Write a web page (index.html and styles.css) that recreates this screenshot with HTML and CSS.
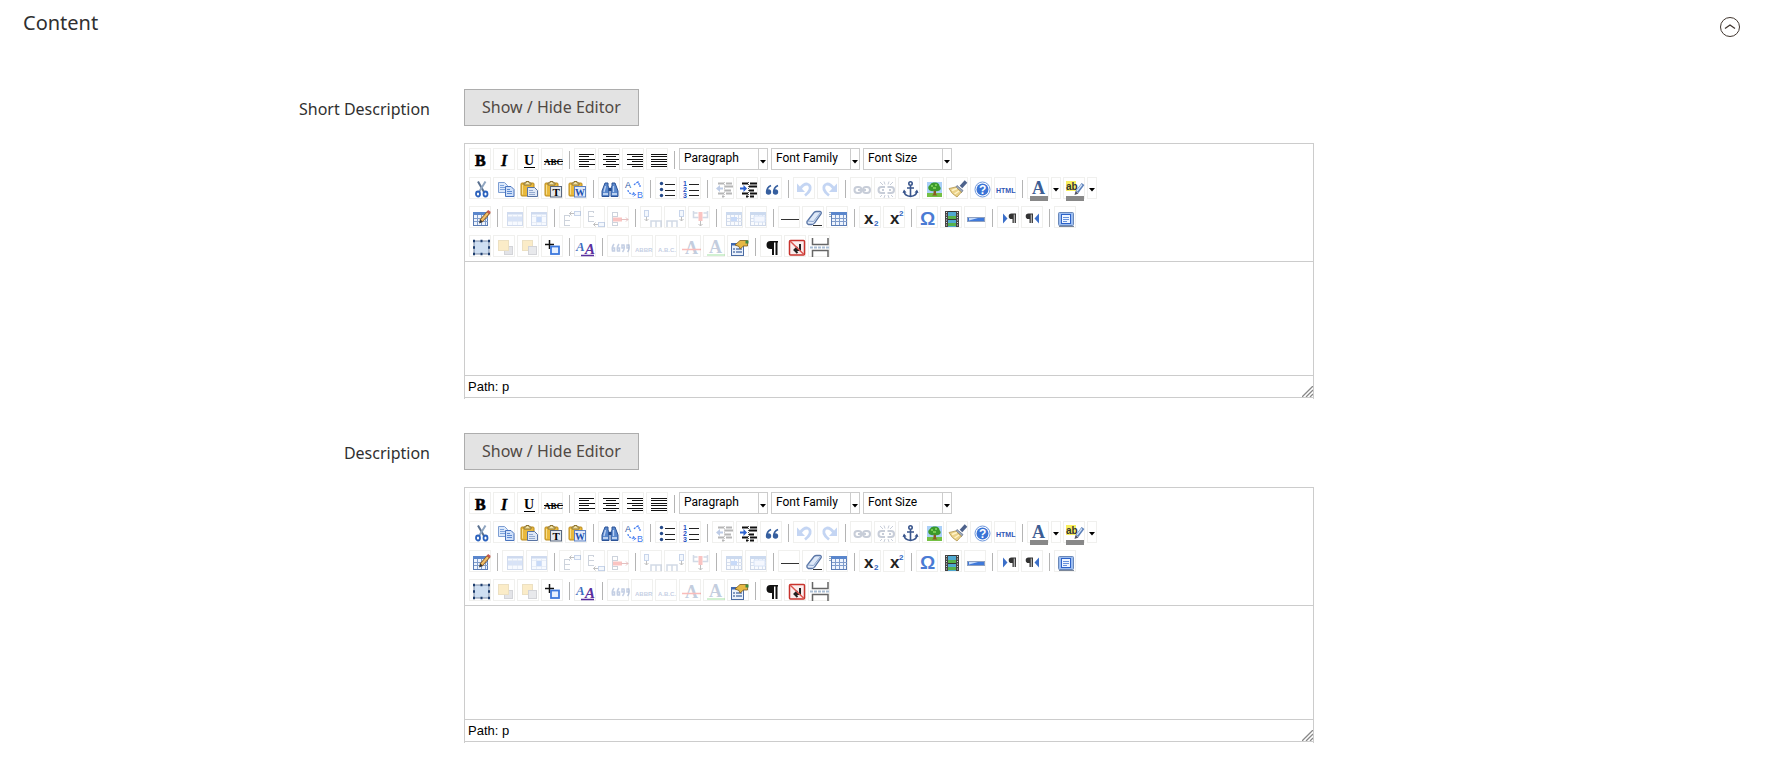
FILE: index.html
```html
<!DOCTYPE html>
<html lang="en">
<head>
  <meta charset="UTF-8" />
  <meta name="viewport" content="width=device-width, initial-scale=1.0"/>
  <title>Content</title>
  <link rel="stylesheet" href="styles.css">
</head>
<body>
  <header class="section-header">
    <h1>Content</h1>
    <button type="button" class="collapse" aria-label="Collapse">
      <svg width="22" height="22" viewBox="0 0 22 22" fill="none" stroke="#41362f">
        <circle cx="11" cy="11" r="9.5"/>
        <path d="M6 12.5 11 9l5 3.5" stroke-width="1.3"/>
      </svg>
    </button>
  </header>

  <main class="fieldset">
    <div class="field">
      <label class="field-label" for="short_description">Short Description</label>
      <div class="field-control">
        <button type="button" class="toggle-editor">Show / Hide Editor</button>
        <div class="editor">
          <div class="toolbar"></div>
          <textarea id="short_description" class="edit-area"></textarea>
          <div class="statusbar">Path: p</div>
        </div>
      </div>
    </div>

    <div class="field">
      <label class="field-label" for="description">Description</label>
      <div class="field-control">
        <button type="button" class="toggle-editor">Show / Hide Editor</button>
        <div class="editor">
          <div class="toolbar"></div>
          <textarea id="description" class="edit-area"></textarea>
          <div class="statusbar">Path: p</div>
        </div>
      </div>
    </div>
  </main>

  <script src="toolbar.js"></script>
</body>
</html>
```

FILE: styles.css
```css
* {
  box-sizing: border-box;
}
body {
  margin: 0;
  background-color: #fff;
  color: #303030;
  font-family: "Noto Sans", "Open Sans", sans-serif;
  font-size: 16px;
  line-height: 22px;
}
button, select, textarea {
  font: inherit;
  margin: 0;
}
.section-header {
  display: flex;
  justify-content: space-between;
  align-items: flex-start;
  padding: 9px 33px 0 23px;
  margin-bottom: 51px;
}
.section-header h1 {
  margin: 0;
  font-size: 20px;
  line-height: 28px;
  font-weight: 400;
}
.collapse {
  display: flex;
  padding: 0;
  margin-top: 7px;
  border: none;
  background: none;
  cursor: pointer;
}
.fieldset {
  padding: 0 35px 0 39px;
}
.field {
  display: flex;
  margin-bottom: 34px;
}
.field-label {
  width: 25%;
  padding: 9px 34px 0 0;
  text-align: right;
}
.field-control {
  width: 50%;
}
.toggle-editor {
  display: block;
  height: 37px;
  padding: 0 17px 2px 17px;
  border: 1px solid #adadad;
  background-color: #e3e3e3;
  color: #514943;
  cursor: pointer;
}
.toggle-editor:hover {
  background-color: #dbdbdb;
}

/* editor box */
.editor {
  margin-top: 17px;
  padding-bottom: 1px;
  border: 1px solid #ccc;
  border-bottom: none;
}
.toolbar {
  display: flex;
  flex-direction: column;
  gap: 7px;
  padding: 4px;
  border-bottom: 1px solid #ccc;
}
.toolbar[hidden] {
  display: none;
}
.toolbar-row {
  display: flex;
  gap: 2px;
  height: 22px;
}
.tool {
  flex: none;
  width: 22px;
  height: 22px;
  padding: 0;
  border: 1px solid #f0f0ee;
  background: none;
  cursor: pointer;
}
.tool:hover {
  border-color: #0a246a;
}
.tool svg {
  display: block;
  overflow: visible;
}
.tool:disabled svg {
  opacity: 0.3;
}
.tool-arrow {
  width: 10px;
}
.separator {
  width: 1px;
  height: 18px;
  margin: 3px 2px 0 4px;
  background-color: #b4b4b4;
}
.list {
  position: relative;
  width: 89px;
  margin-right: 1px;
}
.list select {
  display: block;
  width: 100%;
  height: 22px;
  padding: 0 12px 2px 4px;
  border: 1px solid #ccc;
  border-radius: 0;
  background-color: #fff;
  color: #000;
  font-family: Roboto, sans-serif;
  font-size: 12px;
  line-height: 18px;
  appearance: none;
}
.list svg {
  position: absolute;
  top: 0;
  right: 0;
  border: 1px solid #ccc;
  background-color: #fff;
  pointer-events: none;
}
.edit-area {
  display: block;
  width: 100%;
  height: 113px;
  padding: 8px;
  border: none;
  outline: none;
  resize: none;
}
.statusbar {
  display: flex;
  justify-content: space-between;
  align-items: flex-end;
  height: 23px;
  padding-left: 3px;
  border-top: 1px solid #ccc;
  border-bottom: 1px solid #ccc;
  color: #000;
  font-family: "Liberation Sans", Arial, sans-serif;
  font-size: 13px;
  line-height: 21px;
}

/* letters inside the icons */
.serif {
  font-family: "Liberation Serif", "Times New Roman", serif;
  font-weight: 700;
}
.sans {
  font-family: "Liberation Sans", Arial, sans-serif;
  font-weight: 700;
}
.thin {
  font-weight: 400;
}
```

FILE: toolbar.js
```js
const clipboard = `
  <rect x="3" y="5" width="13" height="13" rx="1" fill="#e9b93c" stroke="#b98a1f"/>
  <path d="M4.5 7v9.5" stroke="#f8df8e"/>
  <path d="M6 7V5h2V3.5h3V5h2v2z" fill="#f3e3a4" stroke="#8e7430"/>`;

const table = (x, y, w, h) => `
  <rect x="${x + 0.5}" y="${y + 0.5}" width="${w}" height="${h}" fill="#eef4fd" stroke="#5b7cb4"/>
  <path d="M${x} ${y + 1.5}h${w + 1}" stroke="#5a86cc" stroke-width="3"/>
  <path d="M${x + 1} ${y + 6.5}h${w}M${x + 1} ${y + 9.5}h${w}M${x + 4.5} ${y + 3}v${h - 3}M${x + 8.5} ${y + 3}v${h - 3}M${x + 12.5} ${y + 3}v${h - 3}" stroke="#7f9ccb"/>`;

const rows = y => `<path d="M4.5 ${y}v11M9.5 ${y}v2M4 ${y}.5h6M4 ${y + 5}.5h6M4 ${y + 10}.5h6" fill="none" stroke="#5d6f8e"/>`;
const cols = x => `<path d="M${x} 20v-6h10v6M${x + 5} 14v6" fill="none" stroke="#6d86ae" stroke-width="1.5"/>`;
const pilcrow = x => `<path d="M${x + 8} 6.5H${x + 3.5}a2.8 2.8 0 0 0 0 5.6h1V16h1.3V7.5h.8V16h1.3z" fill="#333"/>`;
const film = `<path d="M5.5 4v16M16.5 4v16" stroke="#444" stroke-width="3"/><path d="M5.5 5v14M16.5 5v14" stroke="#ddd" stroke-dasharray="1 1.5"/>`;
const lines = list => `<path d="${list.map(([x, y, w]) => `M${x} ${y}.5h${w}`).join("")}" stroke="#111" stroke-width="1.2"/>`;

const icons = {
  bold: `<text x="5" y="17" font-size="16" class="serif" stroke="#000" stroke-width=".6">B</text>`,
  italic: `<text x="7" y="17" font-size="16" class="serif" font-style="italic" stroke="#000" stroke-width=".3">I</text>`,
  underline: `<text x="6" y="16" font-size="14" class="serif">U</text><path d="M6 18.5h11" stroke="#000"/>`,
  strikethrough: `<text x="2" y="16" font-size="9" class="serif">ABC</text><path d="M2 12.5h19" stroke="#000"/>`,
  justifyleft: lines([[4, 5, 15], [4, 7, 10], [4, 10, 16], [4, 12, 10], [4, 15, 16], [4, 17, 10]]),
  justifycenter: lines([[4, 5, 16], [7, 7, 10], [4, 10, 16], [7, 12, 10], [4, 15, 16], [7, 17, 10]]),
  justifyright: lines([[4, 5, 16], [9, 7, 11], [4, 10, 16], [9, 12, 11], [4, 15, 16], [9, 17, 11]]),
  justifyfull: lines([[4, 5, 16], [4, 7, 16], [4, 10, 16], [4, 12, 16], [4, 15, 16], [4, 17, 16]]),

  cut: `<path d="M8 3.5 14 14" stroke="#59708f" stroke-width="2"/><path d="M15.5 3.5 9 14" stroke="#8fa5c0" stroke-width="2"/>
    <ellipse cx="8" cy="16" rx="2" ry="2.5" fill="none" stroke="#2c62bd" stroke-width="1.8"/>
    <ellipse cx="15.5" cy="16" rx="2" ry="2.5" fill="none" stroke="#2c62bd" stroke-width="1.8"/>`,
  copy: `<path d="M4.5 4.5h6l3 3v7h-9z" fill="#dce9fb" stroke="#7d9ed3"/><path d="M6 7.5h4M6 9.5h5M6 11.5h5" stroke="#7fa4dc"/>
    <path d="M11.5 8.5h5.5l3 3v7h-8.5z" fill="#cfe0fa" stroke="#4873bd"/><path d="M13 11.5h3M13 13.5h5M13 15.5h5" stroke="#5f8bd0"/>`,
  paste: clipboard + `<path d="M9.5 9.5h7l3 3v6h-10z" fill="#dfe8f6" stroke="#5873a3"/><path d="M11 12.5h4M11 14.5h6M11 16.5h6" stroke="#94aacf"/>`,
  pastetext: clipboard + `<rect x="8.5" y="8.5" width="11" height="10.5" fill="#e4e8ef" stroke="#59677d"/><text x="10.5" y="18" font-size="11" class="serif">T</text>`,
  pasteword: clipboard + `<rect x="8.5" y="8.5" width="11" height="10.5" fill="#e1eafa" stroke="#5f83c4"/><text x="9" y="17.5" font-size="10" class="serif" fill="#1d4fae">W</text>`,
  search: `<path d="M6 5h3v3l1 2v8.5H3V13zM13 5h3l3 8v5.5h-7V10l1-2z" fill="#5a88cc" stroke="#2b5296"/>
    <path d="M9.5 10h3v3h-3z" fill="#234a8c"/><path d="M6.5 8 5 14M14.5 8v6" stroke="#bcd2f3" stroke-width="1.3"/><path d="M4 16h5M13 16h5" stroke="#dce9fb" stroke-width="1.5"/>`,
  replace: `<text x="2" y="10" font-size="9" class="sans thin" fill="#2c5aa8">A</text><text x="14" y="19.5" font-size="9" class="sans thin" fill="#3f7af0">B</text>
    <path d="M11 7q2-2.5 5-3M16 7V4h-2.5M5 12q0 4 7 4.5M10 14.5l2.5 2-2.5 2M17 7v3" fill="none" stroke="#3f7af0" stroke-width="1.2" stroke-dasharray="2 1"/>`,

  bullist: `<g fill="#254a8a"><circle cx="5.500" cy="5.500" r="1.700"/><circle cx="5.500" cy="11.500" r="1.700"/><circle cx="5.500" cy="17.500" r="1.700"/></g><path d="M9 6.5h10M9 12.5h10M9 17.5h10" stroke="#222" stroke-width="1.2"/>`,
  numlist: `<g font-size="7" class="sans" fill="#1f50c4"><text x="3" y="8">1</text><text x="3" y="14">2</text><text x="3" y="20">3</text></g><path d="M9 6.5h10M9 12.5h10M9 17.5h10" stroke="#222" stroke-width="1.2"/>`,
  outdent: `<path d="M5 5.5h6M13 5.5h6M11 8.5h9M11 12.5h7M5 15.5h6M13 15.5h6M9 18.5h2" stroke="#111" stroke-width="1.8"/><path d="M11.5 4v16" stroke="#555" stroke-dasharray="1 1"/><path d="m3 10.5 4-3.5v2.5h3v2H7V14z" fill="#2c5ab0"/>`,
  indent: `<path d="M5 5.5h6M13 5.5h7M12 8.5h8M12 12.5h5M5 15.5h6M13 15.5h7M9 18.5h2M13 18.5h4" stroke="#111" stroke-width="1.8"/><path d="M11.5 4v16" stroke="#555" stroke-dasharray="1 1"/><path d="M10 10.5 6.5 7v2.5H3v2h3.5V14z" fill="#2c62d0"/>`,
  blockquote: `<g fill="#365f9f"><circle cx="7.5" cy="14" r="2.7"/><circle cx="14.5" cy="14" r="2.7"/></g><path d="M6 14q-.5-4.5 4-6.5M13 14q-.5-4.5 4-6.5" fill="none" stroke="#365f9f" stroke-width="1.7"/>`,
  undo: `<path d="M6 11Q9 6 13 6q4 1 3 5.5-1 3-5 6" fill="none" stroke="#3e78d8" stroke-width="2.8"/><path d="M3 5.500v8.500h8z" fill="#3e78d8"/>`,
  redo: `<path d="M16 11Q13 6 9 6q-4 1-3 5.5 1 3 5 6" fill="none" stroke="#3e78d8" stroke-width="2.8"/><path d="M19 5.500v8.500h-8z" fill="#3e78d8"/>`,
  link: `<g fill="none" stroke="#4a5c80" stroke-width="2"><rect x="3.5" y="9" width="7" height="6" rx="3"/><rect x="12" y="9" width="7" height="6" rx="3"/><path d="M7 12h8"/></g>`,
  unlink: `<g fill="none" stroke="#4a5c80" stroke-width="2"><path d="M10 9H6.5a3 3 0 0 0 0 6H10M7 12h2M14 12h2M12.5 9H16a3 3 0 0 1 0 6h-3.5"/><path d="M9 3.500l1 3M14 3.500l-1 3M9 20l1-3M14 20l-1-3M5 4l3 3M18 4l-3 3M5 19l2-2M18 19l-2-2" stroke-width="1"/></g>`,
  anchor: `<g fill="none" stroke="#3a568c" stroke-width="1.6"><circle cx="11.5" cy="5.5" r="1.7"/><path d="M11.5 7.5V18M8 10h7M5 13q.5 5 6.5 5.5 6-.5 6.5-5.5"/></g><path d="M3.5 15 5 11.5 7.5 14.5zM19.5 15 18 11.5 15.5 14.5z" fill="#3a568c"/>`,
  image: `<rect x="4" y="4" width="15" height="15" fill="#a9cff8"/><rect x="4" y="15" width="15" height="4" fill="#74c043"/><path d="M10.5 11h2.5v5l1.5 1.5h-5.5L10.5 16z" fill="#8a5a23"/>
    <path d="M6 12q-2-3 1-5 1-3 4.5-2.5Q16 4 16.5 8q2.5 2.5 0 4.5-3 1.5-5 0-3 1.5-5.5-.5z" fill="#3a9a2c"/><path d="M8 8h2M12 7h2M10 10h3" stroke="#8ada5c" stroke-width="1.5"/>`,
  cleanup: `<path d="m14 9 5-5.500" stroke="#4d628c" stroke-width="3.5"/><path d="m10 7.500 6 5-1.5 2L8.500 9.500z" fill="#9aa7be" stroke="#59677d" stroke-width=".7"/><path d="M8.500 9 2 10.500q2.500 5.500 8 8.500l4.500-5z" fill="#ecd38a" stroke="#a88a3e" stroke-width=".7"/><path d="m5 12.500 5-2M7.500 16l4.500-3" stroke="#fff3c8" stroke-width="1.500"/>`,
  help: `<circle cx="11.5" cy="11.5" r="7.5" fill="#fff" stroke="#6f98dc"/><circle cx="11.5" cy="11.5" r="6" fill="#3b74d6"/><text x="8" y="16" font-size="12" class="sans" fill="#fff">?</text>`,
  code: `<text x="1" y="15" font-size="7" class="sans" fill="#2f55b5">HTML</text>`,
  forecolor: `<text x="4" y="16" font-size="18" class="serif" fill="#3c5d94">A</text><path fill="#888" d="M2 18h18v5H2z"/>`,
  backcolor: `<path fill="#f8ef5e" d="M2 3h10v10H2z"/><text x="2" y="11.5" font-size="10" class="sans" fill="#333">ab</text><path d="m13 14 6-8" stroke="#5b7fb8" stroke-width="3.5"/><path d="m13 13 5-6.5" stroke="#d6e4f8" stroke-width="1.3"/><path d="m10.500 17 1-4 3 2.5z" fill="#556"/><path fill="#888" d="M2 18h18v5H2z"/>`,

  table: table(3, 5, 14, 13) + `<path d="m11 14 8-9" stroke="#8a5a22" stroke-width="4"/><path d="m11.5 13.5 6.5-7.5" stroke="#f1c06b" stroke-width="2.2"/><path d="m9 16.5 1-4 2.800 2.5z" fill="#333"/><path d="m18 6 1.500-2" stroke="#c65a50" stroke-width="3.5"/>`,
  row_props: `<rect x="4.5" y="5.5" width="15" height="13" fill="#e8f1ff" stroke="#6d8fc9"/><path d="M4 6.5h16" stroke="#5f87cc" stroke-width="2"/><path d="M5 12h14" stroke="#7fa5e6" stroke-width="4"/><path d="M5 9.5h14M5 14.5h14M9.5 8v10M14.5 8v10" stroke="#8ba8d8" stroke-width=".6"/>`,
  cell_props: `<rect x="4.5" y="5.5" width="15" height="13" fill="#e8f1ff" stroke="#6d8fc9"/><path d="M4 6.5h16" stroke="#5f87cc" stroke-width="2"/><path d="M9 12.5h6" stroke="#4d86ea" stroke-width="5"/><path d="M5 9.5h14M5 15.5h14M9.5 8v10M14.5 8v10" stroke="#8ba8d8" stroke-width=".6"/>`,
  row_before: rows(8) + `<rect x="14.5" y="4.5" width="6" height="4" fill="#dce9fb" stroke="#4d78c0"/><path d="M14 6.5H9.5m2-2-2 2 2 2" fill="none" stroke="#333"/>`,
  row_after: rows(4) + `<rect x="14.5" y="15.5" width="6" height="4" fill="#dce9fb" stroke="#4d78c0"/><path d="M14 17.5H9.5m2-2-2 2 2 2" fill="none" stroke="#333"/>`,
  delete_row: `<path d="M4.500 5v14M9.500 5v4M9.500 16v3M4 5.500h5M4 9.500h6M4 15.500h6M4 18.500h6" fill="none" stroke="#5d6f8e"/><path d="M5 12.5h9" stroke="#f0403a" stroke-width="4"/><path d="M13 12.5h7m-2-2 2 2-2 2" fill="none" stroke="#a33"/>`,
  col_before: `<rect x="3.5" y="3.5" width="4" height="6" fill="#dce9fb" stroke="#4d78c0"/><path d="M5.5 10v4m-2-2 2 2 2-2" fill="none" stroke="#333"/>` + cols(10),
  col_after: `<rect x="14.5" y="3.5" width="4" height="6" fill="#dce9fb" stroke="#4d78c0"/><path d="M16.5 10v4m-2-2 2 2 2-2" fill="none" stroke="#333"/>` + cols(2),
  delete_col: `<path d="M4.5 4v6.500h5M18.5 4v6.500h-5M4.5 6h4M18.5 6h-4" fill="none" stroke="#6d86ae" stroke-width="1.5"/><path d="M11.5 5v9" stroke="#f0403a" stroke-width="4"/><path d="M11.5 14v5m-2-2 2 2 2-2" fill="none" stroke="#333"/>`,
  split_cells: table(4, 5, 15, 13) + `<path d="M9 12h6" stroke="#4d86ea" stroke-width="4"/>`,
  merge_cells: table(4, 5, 15, 13) + `<path d="M8 9h11v6H8z" fill="#dbe8fc" stroke="#7fa5e6"/>`,
  hr: `<path d="M2 12.5h18" stroke="#333"/>`,
  removeformat: `<path d="M4 14.5 11 5.5q1-1 2.5-1H17q2 .5 1 2.5L11.5 16q-1 1.5-2.5 1.5H5.5q-2-.5-1.5-3z" fill="#dfe9f8" stroke="#5a76a6" stroke-width="1.3"/><path d="m4.5 14 6 .5 7-9" fill="none" stroke="#8ea8d0"/><path d="M10 18.5h9" stroke="#333"/>`,
  visualaid: table(4, 5, 15, 13) + `<path d="M2 5.5h2M2 7.5h2M2 9.5h2" stroke="#9ab"/>`,
  sub: `<text x="4" y="17" font-size="17" class="sans" fill="#222">x</text><text x="14" y="19" font-size="8" class="sans" fill="#2f63c0">2</text>`,
  sup: `<text x="6" y="17" font-size="17" class="sans" fill="#222">x</text><text x="15" y="9" font-size="8" class="sans" fill="#2f63c0">2</text>`,
  charmap: `<text x="3" y="18" font-size="19" class="sans" fill="#4a7bd4">Ω</text>`,
  media: `<path fill="#4fa9d0" d="M5 4h12v16H5z"/><path fill="#57b24a" d="M6 9h10v3H6zM6 16h10v3H6z"/><path d="M6 12.5h10M6 4.5h10" stroke="#333"/>` + film,
  advhr: `<rect x="2.5" y="10.5" width="17" height="4" fill="#3f79da" stroke="#8ea0c0"/><path d="m4 13.5 9-2.5H4z" fill="#c7dcfb"/>`,
  ltr: `<path d="M5 6.5v10l4.5-5z" fill="#3b6fc9"/>` + pilcrow(10),
  rtl: pilcrow(3) + `<path d="M17 6.5v10l-4.5-5z" fill="#3b6fc9"/>`,
  fullscreen: `<rect x="3.5" y="5.5" width="15" height="13" rx="1" fill="#9cbdf0" stroke="#6a88b8"/><rect x="6.5" y="7.5" width="9" height="9" fill="#eef5ff" stroke="#2c62c8"/><path d="M8 10.5h6M8 12.5h6M8 14.5h4" stroke="#6792dc"/><path d="M4 19.5h15" stroke="#7a8699"/>`,

  insertlayer: `<rect x="4" y="5" width="15" height="13" fill="#cfdff2" stroke="#7c8ba5"/><path d="M3 5h2M10.5 5h2M18 5h2M3 11.5h2M18 11.5h2M3 18h2M10.5 18h2M18 18h2" stroke="#1d3d6e" stroke-width="2.5"/>`,
  moveforward: `<rect x="10.5" y="10.5" width="8" height="8" fill="#a4a9b4" stroke="#70757f"/><rect x="4.5" y="4.5" width="10" height="10" fill="#f3c34b" stroke="#c29a3a"/>`,
  movebackward: `<rect x="4.5" y="4.5" width="10" height="10" fill="#f3c34b" stroke="#c29a3a"/><rect x="10.5" y="10.5" width="8" height="8" fill="#b4b9c2" stroke="#70757f"/>`,
  absolute: `<path d="M3 8.5h9M7.5 4v9" stroke="#111" stroke-width="1.5"/><rect x="9" y="10.5" width="8" height="7.5" fill="#e6f0ff" stroke="#3c78dd" stroke-width="1.8"/>`,
  styleprops: `<text x="1" y="15" font-size="13" class="serif" font-style="italic" fill="#3f6fc0">A</text><text x="10" y="18" font-size="15" class="serif" font-style="italic" fill="#5a2f9e">A</text><path d="M6 19.5h13" stroke="#5a2f9e" stroke-width="1.5"/>`,
  cite: `<g fill="none" stroke="#3c5fa5" stroke-width="1.500"><path d="M6 8q-2.5 3-1.5 7h2v-3h-2M11 8q-2.5 3-1.5 7h2v-3h-2M14.500 16q2.5-3 1.5-7h-2v3h2M19.500 16q2.5-3 1.5-7h-2v3h2"/></g>`,
  abbr: `<text x="3" y="16" font-size="6" class="sans" fill="#3c5fa5">ABBR</text>`,
  acronym: `<text x="2" y="16" font-size="6" class="sans" fill="#3c5fa5">A.B.C.</text>`,
  del: `<text x="5" y="18" font-size="18" class="serif" fill="#3c5d94">A</text><path d="M2 13.5h19" stroke="#f0261e" stroke-width="1.5"/>`,
  ins: `<text x="5" y="17" font-size="18" class="serif" fill="#3c5d94">A</text><path d="M3 19h18" stroke="#3ac03a" stroke-width="1.5"/>`,
  attribs: `<rect x="3.5" y="7.5" width="12" height="12" fill="#eaf1fb" stroke="#4a6ba3"/><path d="M3 8.5h13" stroke="#3c68b4" stroke-width="2"/><path d="M5 13h2M5 16h2M8 13h6M8 16h6" stroke="#5d7cb0" stroke-width="1.3"/><path d="m7 9 5-4.5h7.5V10h-4L12 13l-1-2.5z" fill="#e6b845" stroke="#7c5c1e" stroke-width=".8"/><path d="M17.500 4.500h3v3h-3z" fill="#3f8a44"/>`,
  visualchars: `<path d="M17 5H9.5a4 4 0 0 0 0 8H11v6h2V6.500h1.5V19h2V6.500h.5z" fill="#111"/>`,
  nonbreaking: `<rect x="4.5" y="4.5" width="15" height="14.500" rx="1" fill="#fbeeee" stroke="#c8332d" stroke-width="1.5"/><path d="M15 8v6H9.500m3-3-3 3 3 3" fill="none" stroke="#222" stroke-width="2"/><path d="m5 5 14 13.500" stroke="#dc5550" stroke-width="1.5"/>`,
  pagebreak: `<path d="M3.5 2v6.500h15.500V2M3.5 21v-6.500h15.500V21" fill="none" stroke="#666" stroke-width="1.5"/><path d="M1 11.5h20" stroke="#a9bdd4" stroke-width="2" stroke-dasharray="3 1"/>`
};

// "|" is a separator, "-" in front switches the button off, "+" adds a menu arrow
const toolbarRows = [
  "bold italic underline strikethrough | justifyleft justifycenter justifyright justifyfull | list:Paragraph list:Font_Family list:Font_Size",
  "cut copy paste pastetext pasteword | search replace | bullist numlist | -outdent indent blockquote | -undo -redo | -link -unlink anchor image cleanup help code | +forecolor +backcolor",
  "table | -row_props -cell_props | -row_before -row_after -delete_row | -col_before -col_after -delete_col | -split_cells -merge_cells | hr removeformat visualaid | sub sup | charmap media advhr | ltr rtl | fullscreen",
  "insertlayer -moveforward -movebackward absolute | styleprops | -cite -abbr -acronym -del -ins attribs | visualchars nonbreaking pagebreak"
];

const svg = body => `<svg width="20" height="20" viewBox="0 0 20 20">${body}</svg>`;

function renderItem(item) {
  if (item === "|") return `<span class="separator"></span>`;
  if (item.startsWith("list:")) {
    const name = item.slice(5).replace("_", " ");
    return `<div class="list">
      <select aria-label="${name}"><option>${name}</option></select>
      <svg width="10" height="22" viewBox="0 0 8 20"><path d="M1 11h6l-3 3.5z"/></svg>
    </div>`;
  }
  const name = item.replace(/^[-+]/, "");
  const off = item[0] === "-" ? "disabled" : "";
  let html = `<button type="button" class="tool" aria-label="${name}" ${off}>${svg(icons[name])}</button>`;
  if (item[0] === "+") {
    html += `<button type="button" class="tool tool-arrow" aria-label="${name} menu">
      <svg width="8" height="20" viewBox="0 0 8 20"><path d="M1 10h6l-3 3.5z"/></svg>
    </button>`;
  }
  return html;
}

document.querySelectorAll(".toolbar").forEach(toolbar => {
  toolbar.innerHTML = toolbarRows.map(row =>
    `<div class="toolbar-row">${row.split(" ").map(renderItem).join("")}</div>`
  ).join("");
});

document.querySelectorAll(".statusbar").forEach(bar => {
  bar.innerHTML += `<svg width="11" height="11" viewBox="0 0 11 11"><path d="M0 11 11 0M4 11l7-7M8 11l3-3" stroke="#888" stroke-width="1.3"/></svg>`;
});

document.querySelectorAll(".toggle-editor").forEach(button => {
  button.addEventListener("click", () => {
    const toolbar = button.nextElementSibling.querySelector(".toolbar");
    toolbar.hidden = !toolbar.hidden;
  });
});
```
